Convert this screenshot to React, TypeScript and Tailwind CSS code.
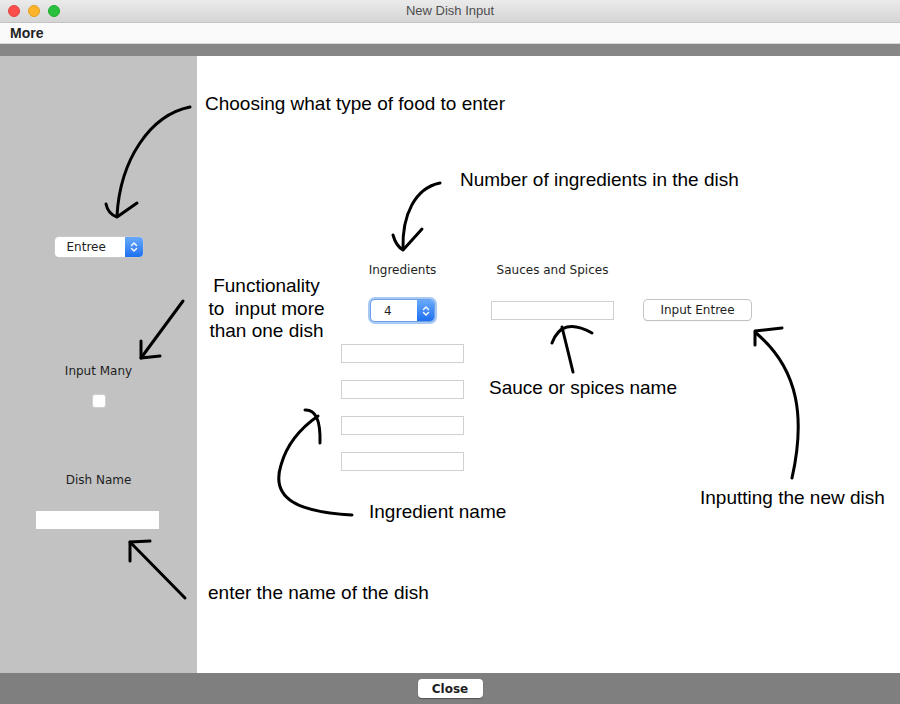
import React from 'react';

const ui = { fontFamily: '"DejaVu Sans", "Noto Sans", sans-serif' };
const hand = { fontFamily: '"Liberation Sans", Arial, sans-serif' };

function Stepper() {
  return (
    <svg width="8" height="12" viewBox="0 0 8 12" fill="none" stroke="white" strokeWidth="1.4" strokeLinecap="round" strokeLinejoin="round">
      <path d="M1.5 4.5 L4 2 L6.5 4.5" />
      <path d="M1.5 7.5 L4 10 L6.5 7.5" />
    </svg>
  );
}

function Field({ className = '' }: { className?: string }) {
  return <div className={`w-[123px] h-[19px] bg-white border border-[#d0d0d0] ${className}`} />;
}

function Arrows() {
  return (
    <svg className="absolute inset-0 pointer-events-none" width="900" height="704" viewBox="0 0 900 704" fill="none" stroke="black" strokeWidth="3" strokeLinecap="round" strokeLinejoin="round">
      {/* type of food */}
      <path d="M190 107 C150 115 120 160 117 216" />
      <path d="M106 204 Q108 214 117 217 L137 203" />
      {/* number of ingredients */}
      <path d="M440 183 C415 188 402 215 403 249" />
      <path d="M393 235 Q396 246 403 250 L422 229" />
      {/* functionality */}
      <path d="M183 301 L141 358" />
      <path d="M141 341 L141 358 L160 356" />
      {/* sauce */}
      <path d="M573 372 L562 327" />
      <path d="M552 343 Q562 316 592 333" />
      {/* ingredient */}
      <path d="M352 515 C300 512 270 500 281 465 C288 440 305 425 318 416" />
      <path d="M305 410 Q321 409 320 443" />
      {/* inputting */}
      <path d="M792 478 C805 420 800 370 756 333" />
      <path d="M782 328 L755 331 L755 345" />
      {/* dish name */}
      <path d="M185 598 L130 542" />
      <path d="M130 561 L130 542 L150 541" />
    </svg>
  );
}

export default function App() {
  return (
    <div className="relative w-[900px] h-[704px] flex flex-col overflow-hidden bg-white" style={ui}>
      {/* title bar */}
      <div className="relative h-[23px] flex items-center bg-gradient-to-b from-[#ebebeb] to-[#d5d5d5] border-b border-[#c4c4c4]">
        <div className="flex gap-[8px] pl-[8px]">
          <span className="w-[12px] h-[12px] rounded-full bg-[#fc4f4c] border border-[#e0443e]" />
          <span className="w-[12px] h-[12px] rounded-full bg-[#fdb429] border border-[#dea123]" />
          <span className="w-[12px] h-[12px] rounded-full bg-[#29c13e] border border-[#1dad2b]" />
        </div>
        <div className="absolute inset-0 flex items-center justify-center text-[13px] text-[#4d4d4d]" style={hand}>
          New Dish Input
        </div>
      </div>
      {/* menu bar */}
      <div className="h-[21px] flex items-center px-[10px] bg-[#fafafa] border-b border-[#d8d8d8]">
        <span className="text-[14px] font-bold text-[#222]" style={hand}>More</span>
      </div>
      <div className="h-[12px] bg-[#878787]" />

      {/* content */}
      <div className="flex flex-1 min-h-0">
        <div className="w-[197px] bg-[#c2c2c2] flex flex-col items-center text-[12px] text-[#1e1e1e]">
          <div className="mt-[181px] w-[88px] h-[20px] flex rounded-[4px] bg-white shadow-[0_0_0_1px_#c8c8c8,0_1px_1px_#a8a8a8]">
            <div className="flex-1 flex items-center pl-[12px] text-[12px]">Entree</div>
            <div className="w-[18px] flex items-center justify-center rounded-r-[4px] bg-gradient-to-b from-[#67a9fa] to-[#1c6ff1]">
              <Stepper />
            </div>
          </div>
          <div className="mt-[106px] h-[16px] leading-[16px]">Input Many</div>
          <div className="mt-[16px] w-[12px] h-[12px] bg-white rounded-[2px] shadow-[0_0_0_1px_#d0d0d0]" />
          <div className="mt-[65px] h-[16px] leading-[16px]">Dish Name</div>
          <div className="mt-[23px] w-[123px] h-[18px] bg-white -ml-[2px]" />
        </div>

        <div className="flex-1 flex items-start pl-[144px] pt-[206px] text-[12px] text-[#1e1e1e]">
          <div className="w-[123px] flex flex-col items-center">
            <div className="h-[16px] leading-[16px]">Ingredients</div>
            <div className="mt-[22px] w-[63px] h-[21px] flex rounded-[4px] bg-white shadow-[0_0_0_1px_#6f9fe6,0_0_0_3px_#a9c9f5]">
              <div className="flex-1 flex items-center pl-[13px]">4</div>
              <div className="w-[17px] flex items-center justify-center rounded-r-[4px] bg-gradient-to-b from-[#67a9fa] to-[#1c6ff1]">
                <Stepper />
              </div>
            </div>
            <div className="mt-[23px] flex flex-col gap-[17px]">
              <Field />
              <Field />
              <Field />
              <Field />
            </div>
          </div>
          <div className="ml-[27px] w-[123px] flex flex-col items-center">
            <div className="h-[16px] leading-[16px]">Sauces and Spices</div>
            <Field className="mt-[23px]" />
          </div>
          <div className="ml-[30px] mt-[38px] w-[107px] h-[20px] flex items-center justify-center bg-white rounded-[4px] shadow-[0_0_0_1px_#c4c4c4,0_1px_1px_#b0b0b0]">
            Input Entree
          </div>
        </div>
      </div>

      {/* bottom bar */}
      <div className="h-[31px] flex items-center justify-center bg-[#7f7f7f]">
        <div className="w-[65px] h-[19px] flex items-center justify-center bg-white rounded-[4px] text-[12px] font-bold text-[#1e1e1e] shadow-[0_1px_1px_#555]">
          Close
        </div>
      </div>

      {/* annotations */}
      <Arrows />
      <div className="absolute inset-0 pointer-events-none text-[19px] leading-[22px] text-black" style={hand}>
        <div className="absolute left-[205px] top-[93px]">Choosing what type of food to enter</div>
        <div className="absolute left-[460px] top-[169px]">Number of ingredients in the dish</div>
        <div className="absolute left-[201px] top-[275px] w-[131px] text-center leading-[22.5px]">
          Functionality<br />to&nbsp; input more<br />than one dish
        </div>
        <div className="absolute left-[489px] top-[377px]">Sauce or spices name</div>
        <div className="absolute left-[369px] top-[501px]">Ingredient name</div>
        <div className="absolute left-[700px] top-[487px]">Inputting the new dish</div>
        <div className="absolute left-[208px] top-[582px]">enter the name of the dish</div>
      </div>
    </div>
  );
}
